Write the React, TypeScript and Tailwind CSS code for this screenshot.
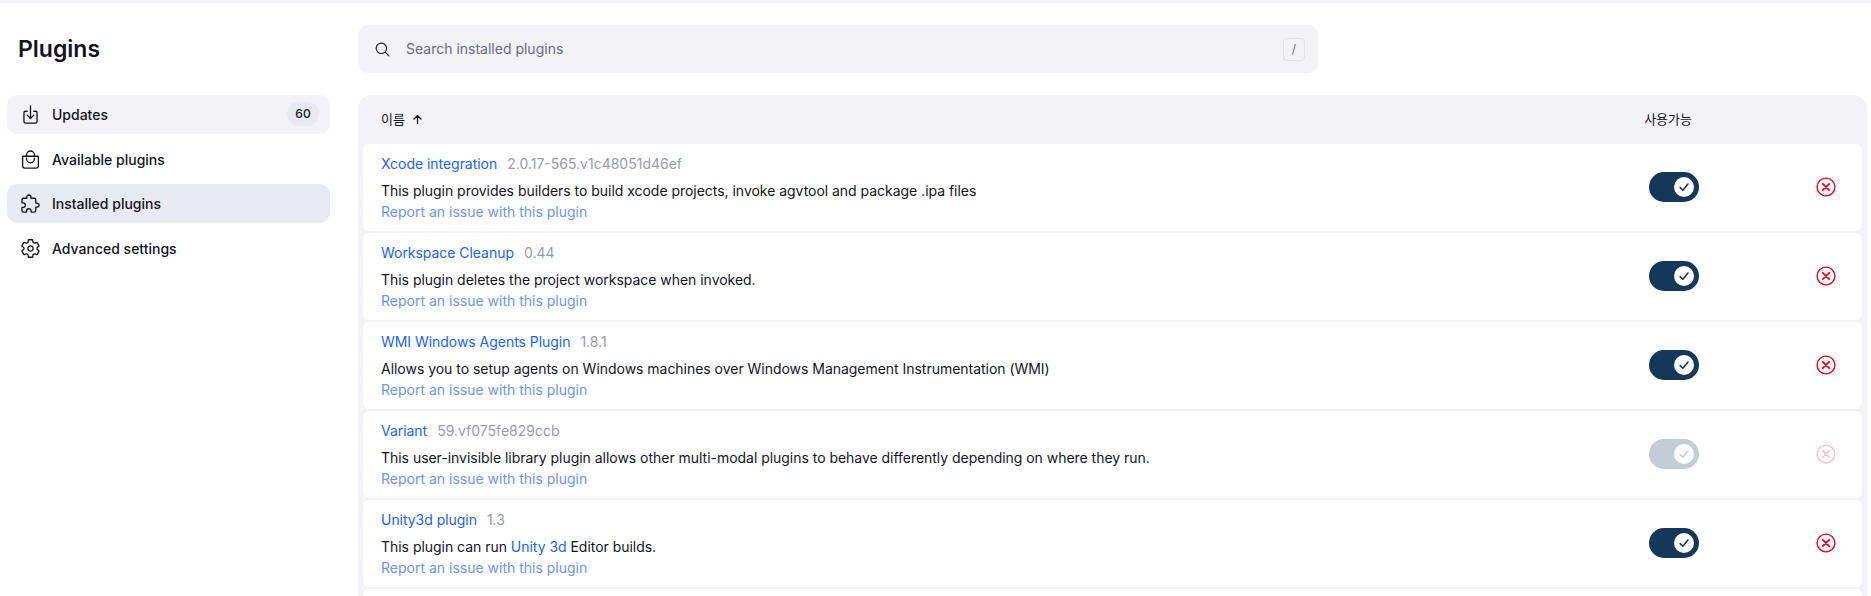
import React from "react";
import {
  IoDownloadOutline,
  IoBagHandleOutline,
  IoExtensionPuzzleOutline,
  IoSettingsOutline,
  IoSearchOutline,
  IoArrowUp,
} from "react-icons/io5";

const font = { fontFamily: '"Inter", "Noto Sans CJK KR", sans-serif' };

function Toggle({ dim }: { dim?: boolean }) {
  return (
    <div className={`flex h-[30px] w-[50px] shrink-0 items-center justify-end rounded-full pr-[5px] ${dim ? "bg-[#c4cdd6]" : "bg-[#14375a]"}`}>
      <div className="flex h-[20px] w-[20px] items-center justify-center rounded-full bg-white">
        <svg width="12" height="12" viewBox="0 0 12 12" fill="none" stroke={dim ? "#c4cdd6" : "#14375a"} strokeWidth="1.6" strokeLinecap="round" strokeLinejoin="round">
          <path d="M2.2 6.6 L4.8 9.2 L10 3" />
        </svg>
      </div>
    </div>
  );
}

function Remove({ dim }: { dim?: boolean }) {
  return (
    <svg width="20" height="20" viewBox="0 0 20 20" fill="none" stroke={dim ? "#fbbcc5" : "#e6001f"} strokeLinecap="round" className="block shrink-0">
      <circle cx="10" cy="10" r="8.9" strokeWidth="1.4" />
      <path d="M6.8 6.8 L13.2 13.2 M13.2 6.8 L6.8 13.2" strokeWidth={dim ? 1.4 : 1.8} />
    </svg>
  );
}

function Row({ name, version, desc, dim }: { name: string; version: string; desc: React.ReactNode; dim?: boolean }) {
  return (
    <div className="flex h-[87px] shrink-0 items-center rounded-[6px] bg-white pb-[2px] pl-[18px] pr-[26px]">
      <div className="mb-[-2px] flex h-[87px] min-w-0 flex-1 flex-col pt-[10px] text-[14px] leading-[20px]">
        <div className="flex gap-[10px]">
          <a className="tracking-[-0.04px] text-[#2563eb]">{name}</a>
          <span className="text-[#9a9aae]">{version}</span>
        </div>
        <div className="mt-[7px] tracking-[-0.03px] text-[#14141f]">{desc}</div>
        <a className="mt-[1px] text-[#6f94f2]">Report an issue with this plugin</a>
      </div>
      <Toggle dim={dim} />
      <div className="ml-[117px]">
        <Remove dim={dim} />
      </div>
    </div>
  );
}

function NavItem({ icon, label, bg, badge }: { icon: React.ReactNode; label: string; bg?: string; badge?: string }) {
  return (
    <div className={`flex h-[39px] items-center rounded-[10px] pl-[13px] pr-[11px] text-[14px] font-[450] text-[#14141f] ${bg ?? ""}`}>
      <span className="flex w-[32px] shrink-0 items-center text-[21px]">{icon}</span>
      <span className="flex-1">{label}</span>
      {badge && (
        <span className="mb-[1px] flex h-[24px] w-[32px] items-center justify-center rounded-full bg-[#e9e9f2] text-[12px] font-[450]">{badge}</span>
      )}
    </div>
  );
}

export default function App() {
  return (
    <div style={font} className="h-[596px] w-full overflow-hidden bg-white">
      <div className="h-[3px] bg-[#f2f2f7]" />
      <div className="flex pl-[7px] pr-[4px]">
        <aside className="w-[323px] shrink-0">
          <h1 className="mb-[31px] ml-[11px] mt-[31px] text-[23px] font-semibold leading-[30px] text-[#14141f]">Plugins</h1>
          <nav className="flex flex-col gap-[5.5px]">
            <NavItem icon={<IoDownloadOutline />} label="Updates" bg="bg-[#f2f2f7]" badge="60" />
            <NavItem icon={<IoBagHandleOutline />} label="Available plugins" />
            <NavItem icon={<IoExtensionPuzzleOutline />} label="Installed plugins" bg="bg-[#e9e9f2]" />
            <NavItem icon={<IoSettingsOutline />} label="Advanced settings" />
          </nav>
        </aside>
        <main className="ml-[28px] min-w-0 flex-1 pt-[22px]">
          <div className="flex h-[48px] w-[960px] items-center rounded-[10px] bg-[#f2f2f7] pl-[16px] pr-[13px]">
            <IoSearchOutline className="shrink-0 text-[17px] text-[#14141f]" />
            <span className="mb-[1px] ml-[15px] flex-1 text-[14px] leading-[20px] text-[#6b6b80]">Search installed plugins</span>
            <span className="flex h-[23px] w-[22px] items-center justify-center rounded-[4px] border border-[#e2e2ec] text-[12px] text-[#6b6b80]">/</span>
          </div>
          <div className="mt-[22px] flex h-[520px] flex-col rounded-t-[14px] bg-[#f2f2f7] px-[5px]">
            <div className="flex h-[49px] shrink-0 items-center pl-[18px] text-[13px] text-[#14141f]">
              <span className="flex flex-1 items-center gap-[6px]">
                이름 <IoArrowUp className="text-[13px]" />
              </span>
              <span className="mr-[170px]">사용가능</span>
            </div>
            <div className="flex flex-col gap-[2px]">
              <Row name="Xcode integration" version="2.0.17-565.v1c48051d46ef" desc="This plugin provides builders to build xcode projects, invoke agvtool and package .ipa files" />
              <Row name="Workspace Cleanup" version="0.44" desc="This plugin deletes the project workspace when invoked." />
              <Row name="WMI Windows Agents Plugin" version="1.8.1" desc="Allows you to setup agents on Windows machines over Windows Management Instrumentation (WMI)" />
              <Row dim name="Variant" version="59.vf075fe829ccb" desc="This user-invisible library plugin allows other multi-modal plugins to behave differently depending on where they run." />
              <Row
                name="Unity3d plugin"
                version="1.3"
                desc={
                  <>
                    This plugin can run <a className="text-[#2563eb]">Unity 3d</a> Editor builds.
                  </>
                }
              />
              <div className="h-[87px] shrink-0 rounded-[6px] bg-white" />
            </div>
          </div>
        </main>
      </div>
    </div>
  );
}
